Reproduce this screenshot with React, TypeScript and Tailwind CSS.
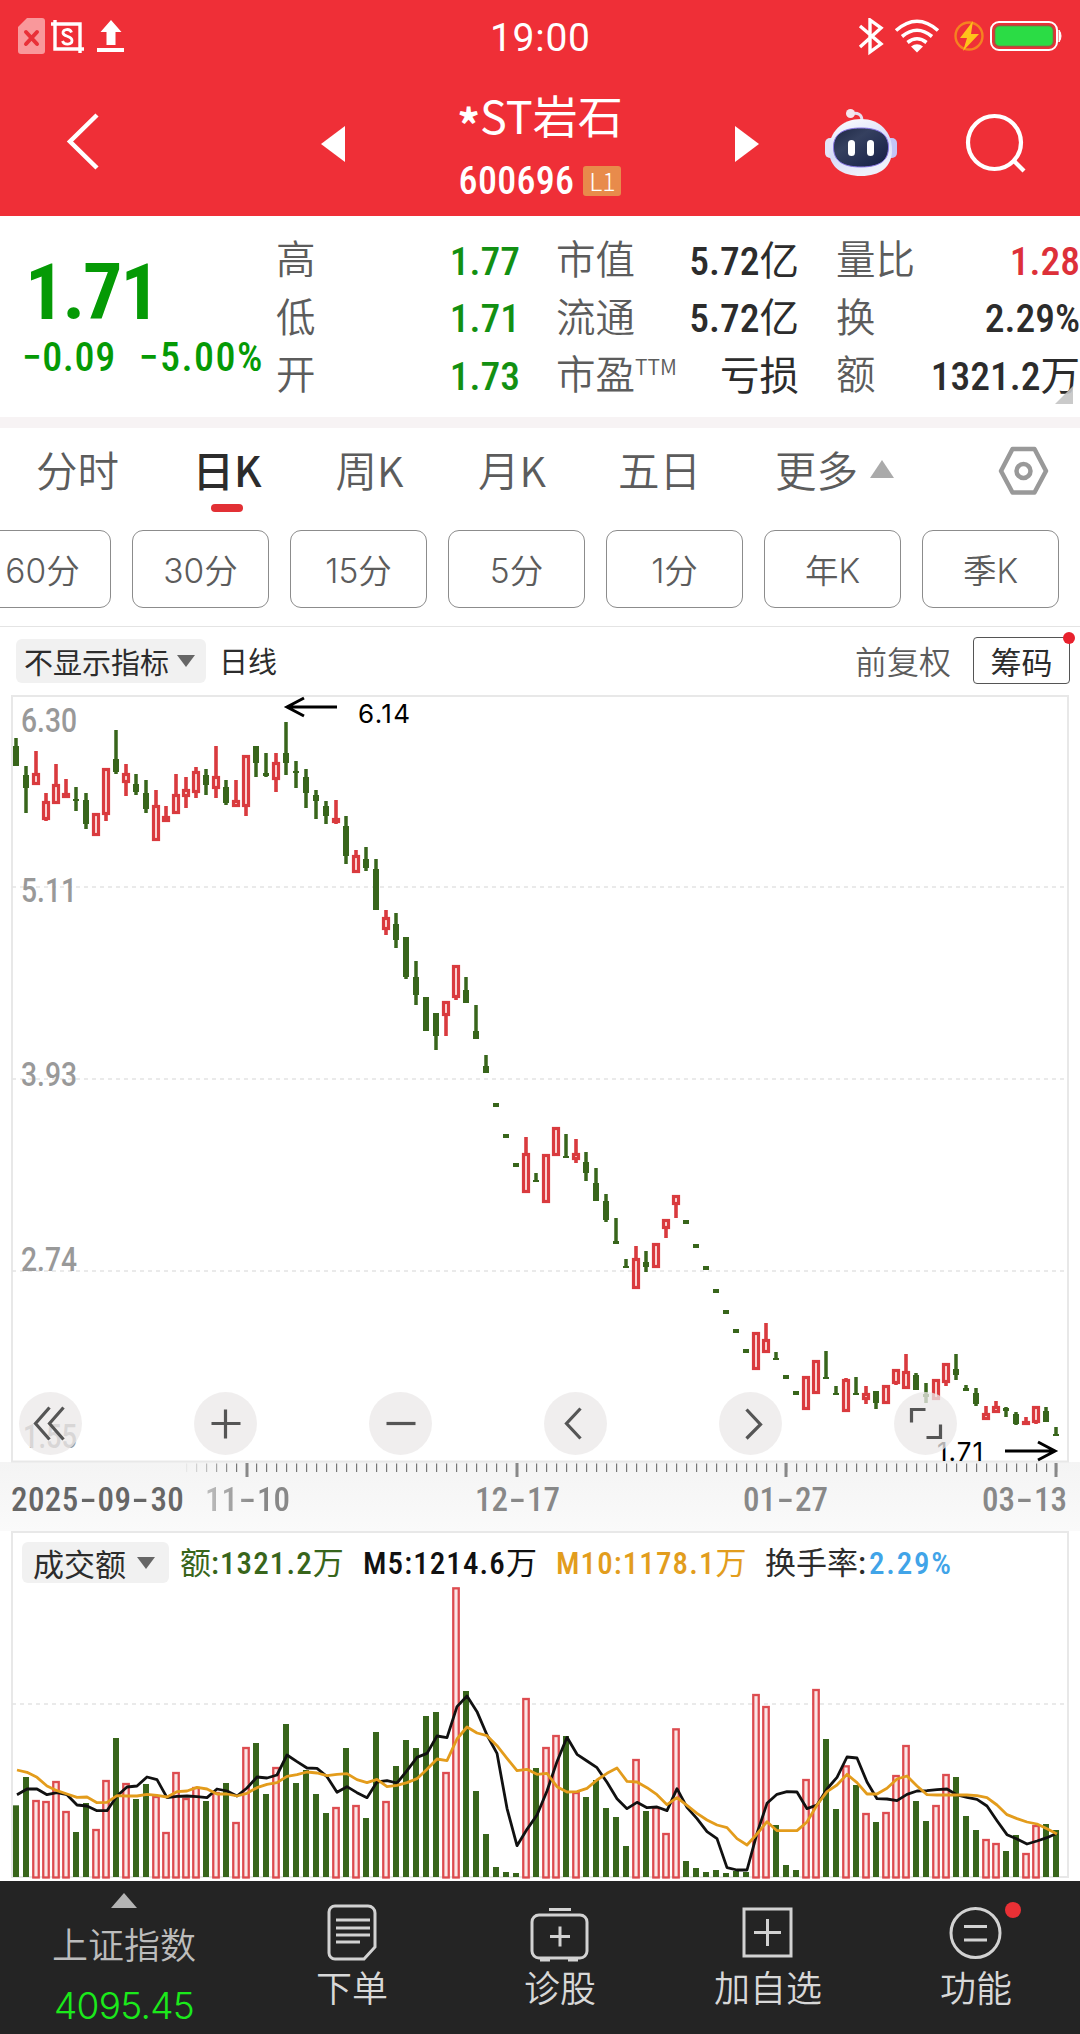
import type { ReactNode } from "react";

type Candle = [up: number, high: number, top: number, bottom: number, low: number];

// One entry per trading day: rising flag, then wick and body positions in chart pixels.
const CANDLES: Candle[] = [
  [0, 738, 746, 766, 766], [0, 766, 775, 788, 813], [1, 751, 773, 785, 785], [1, 793, 801, 820, 821], [1, 764, 784, 804, 804],
  [1, 779, 793, 798, 798], [0, 787, 799, 801, 811], [0, 793, 800, 824, 829], [1, 813, 813, 836, 836], [1, 768, 768, 815, 821],
  [0, 730, 759, 772, 774], [1, 764, 773, 783, 796], [0, 774, 784, 792, 795], [0, 780, 793, 809, 813], [1, 790, 805, 841, 841],
  [1, 806, 816, 822, 822], [1, 774, 794, 814, 814], [1, 777, 789, 797, 808], [1, 767, 771, 793, 798], [0, 769, 775, 785, 795],
  [1, 746, 776, 789, 798], [0, 780, 787, 803, 805], [1, 780, 800, 807, 807], [1, 755, 755, 807, 816], [0, 746, 746, 763, 777],
  [0, 753, 773, 776, 777], [1, 753, 762, 780, 792], [0, 722, 753, 763, 775], [0, 761, 771, 773, 788], [0, 769, 777, 793, 808],
  [0, 790, 795, 801, 819], [0, 801, 806, 816, 824], [1, 800, 818, 823, 824], [0, 816, 826, 856, 864], [1, 850, 855, 873, 873],
  [0, 847, 859, 868, 871], [0, 859, 869, 910, 910], [1, 910, 917, 930, 935], [0, 913, 924, 940, 948], [0, 937, 937, 977, 979],
  [0, 961, 977, 995, 1005], [0, 997, 997, 1031, 1031], [0, 1013, 1013, 1036, 1050], [1, 1001, 1001, 1016, 1036], [1, 965, 965, 998, 1000],
  [0, 977, 990, 1003, 1003], [0, 1005, 1031, 1039, 1039], [0, 1055, 1066, 1073, 1073], [0, 1103, 1103, 1107, 1107], [0, 1134, 1134, 1138, 1138],
  [0, 1163, 1163, 1167, 1167], [1, 1137, 1153, 1193, 1193], [0, 1173, 1180, 1182, 1182], [1, 1154, 1154, 1203, 1203], [1, 1127, 1127, 1156, 1156],
  [0, 1134, 1156, 1158, 1158], [1, 1139, 1153, 1160, 1163], [0, 1152, 1162, 1173, 1181], [0, 1168, 1183, 1201, 1201], [0, 1194, 1201, 1220, 1222],
  [0, 1218, 1241, 1244, 1244], [0, 1259, 1266, 1268, 1268], [1, 1246, 1258, 1289, 1289], [0, 1251, 1262, 1267, 1272], [1, 1243, 1243, 1268, 1268],
  [1, 1219, 1219, 1229, 1238], [1, 1195, 1195, 1205, 1218], [0, 1220, 1220, 1224, 1224], [0, 1244, 1244, 1248, 1248], [0, 1266, 1266, 1270, 1270],
  [0, 1289, 1289, 1293, 1293], [0, 1310, 1310, 1314, 1314], [0, 1329, 1329, 1333, 1333], [0, 1349, 1349, 1353, 1353], [1, 1332, 1332, 1370, 1370],
  [1, 1323, 1339, 1353, 1353], [0, 1352, 1358, 1360, 1360], [0, 1375, 1375, 1379, 1379], [0, 1391, 1391, 1395, 1395], [1, 1376, 1376, 1410, 1410],
  [1, 1360, 1360, 1394, 1394], [0, 1351, 1377, 1379, 1379], [0, 1386, 1393, 1395, 1395], [1, 1378, 1379, 1412, 1412], [0, 1377, 1393, 1395, 1395],
  [1, 1386, 1393, 1400, 1404], [0, 1391, 1391, 1403, 1409], [1, 1385, 1385, 1404, 1404], [1, 1369, 1369, 1384, 1385], [1, 1354, 1371, 1389, 1389],
  [0, 1373, 1375, 1390, 1390], [0, 1383, 1394, 1397, 1403], [1, 1379, 1379, 1400, 1400], [1, 1363, 1363, 1383, 1386], [0, 1354, 1369, 1375, 1380],
  [0, 1385, 1388, 1391, 1391], [0, 1388, 1393, 1404, 1406], [1, 1406, 1413, 1420, 1420], [1, 1401, 1406, 1413, 1413], [0, 1407, 1408, 1411, 1417],
  [0, 1412, 1414, 1424, 1425], [1, 1417, 1421, 1425, 1425], [1, 1406, 1406, 1423, 1424], [0, 1407, 1411, 1422, 1422], [0, 1427, 1434, 1436, 1436],
];

// Volume and moving averages are stored in thirds of a pixel, measured down from y = 1560.
const VOLUMES = [
  736, 651, 720, 723, 663, 753, 816, 729, 807, 660, 534, 669, 717, 672, 708, 816, 636, 714, 681, 723, 696, 669, 786, 561, 549,
  702, 621, 492, 669, 630, 702, 759, 741, 564, 735, 774, 516, 723, 618, 540, 564, 468, 456, 636, 82, 393, 693, 822, 921, 936,
  939, 414, 624, 561, 525, 528, 696, 711, 660, 744, 771, 858, 597, 753, 741, 819, 505, 903, 924, 936, 930, 939, 933, 936, 402,
  438, 795, 915, 930, 657, 387, 537, 747, 616, 675, 759, 786, 756, 645, 555, 723, 783, 735, 642, 651, 768, 810, 837, 849, 873,
  825, 879, 795, 792, 810,
];

const M5 = [
  704, 687, 687, 704, 698, 704, 735, 738, 752, 752, 708, 681, 678, 651, 659, 713, 709, 708, 710, 713, 687, 693, 708, 684, 651,
  654, 645, 585, 605, 624, 625, 650, 697, 680, 698, 713, 666, 662, 669, 632, 592, 580, 528, 533, 440, 408, 455, 525, 580, 745,
  857, 808, 765, 693, 605, 532, 583, 603, 623, 667, 716, 746, 727, 743, 741, 752, 686, 742, 776, 815, 836, 923, 930, 930, 820,
  730, 703, 695, 696, 746, 735, 687, 652, 591, 594, 666, 716, 717, 722, 703, 693, 692, 689, 687, 705, 712, 718, 738, 782, 824,
  837, 852, 843, 833, 820,
];

const M10 = [
  630, 637, 652, 678, 692, 702, 712, 711, 728, 727, 707, 708, 708, 703, 706, 711, 695, 693, 682, 687, 702, 702, 708, 700, 683,
  673, 668, 649, 644, 636, 639, 647, 643, 641, 659, 668, 658, 680, 676, 668, 656, 628, 597, 602, 537, 501, 519, 527, 557, 595,
  632, 628, 643, 640, 680, 696, 695, 685, 660, 640, 624, 664, 666, 683, 704, 734, 713, 736, 760, 780, 795, 803, 836, 855, 822,
  785, 812, 812, 812, 786, 735, 695, 675, 643, 668, 702, 702, 685, 657, 648, 678, 704, 705, 705, 705, 705, 707, 713, 735, 764,
  776, 786, 792, 806, 822,
];

const UP = "#d93a3e";
const DOWN = "#38651b";
const NUM = "font-['Roboto','Noto_Sans_CJK_SC',sans-serif] font-medium [font-stretch:85%]";
const HAN = "font-['Noto_Sans_CJK_SC',sans-serif]";

const dayX = (i: number) => 16 + i * 10;
const volY = (v: number) => 28 + v / 3;
const linePoints = (values: number[]) => values.map((v, i) => `${dayX(i) + 1},${volY(v)}`).join(" ");

function Figure({ children }: { children: string }) {
  return children.split(/([\u4e00-\u9fff]+)/).map((part, i) =>
    i % 2 ? (
      <span key={i} className="font-normal tracking-normal">{part}</span>
    ) : (
      part
    ),
  );
}

function StatusBar() {
  return (
    <div className="flex h-[74px] items-center px-[18px] text-white">
      <div className="flex w-[472px] items-center pb-0.5">
        <svg width="27" height="36" viewBox="0 0 27 36">
          <path d="M9 0H24a3 3 0 0 1 3 3V33a3 3 0 0 1-3 3H3a3 3 0 0 1-3-3V9Z" fill="#f9989b" />
          <path d="M8 14 19 26M19 14 8 26" stroke="#e93038" strokeWidth="4" strokeLinecap="round" />
        </svg>
        <svg className="ml-1.5" width="33" height="33" viewBox="0 0 33 33" fill="none" stroke="#fff" strokeWidth="3.4">
          <path d="M0 4H29V33M4 0V29H33" />
          <path d="M20.500 12.500C19 8 11.500 9 12 13c.5 4 9 2.500 9 7.500 0 4.500-8 5-9.500.5" strokeWidth="2.800" />
        </svg>
        <svg className="ml-[13px]" width="28" height="34" viewBox="0 0 28 34" fill="#fff">
          <path d="M14 1 24.500 13H18.500V26H9.500V13H3.500ZM0 29H27V33H0Z" />
        </svg>
      </div>
      <div className="flex-1 pt-0.5 font-['Roboto'] text-[39px] tracking-[0.7px]">19:00</div>
      <svg className="-mr-0.5" width="206" height="38" viewBox="858 18 206 38" fill="none" stroke="#fff">
        <path d="M860 26 881 44 870 52V20L881 28 860 47" strokeWidth="3.400" />
        <path d="M896 30.500Q917 12 938 30.500M902 36.500Q917 24 932 36.500M907.500 42.500Q917 35 926.500 42.500" strokeWidth="3.600" />
        <path d="M911 46.500Q917 42 923 46.500L917 52.500Z" fill="#fff" stroke="none" />
        <circle cx="969" cy="36" r="13.500" stroke="#f58220" strokeWidth="2.400" />
        <path d="M973 21 960 38H967L963 51 979 34H971Z" fill="#ffc21a" stroke="none" />
        <rect x="991" y="22" width="66" height="28" rx="8" strokeWidth="2" />
        <rect x="994.500" y="25.500" width="59" height="21" rx="5" fill="#2bdc45" stroke="#a8503f" strokeWidth="1.500" />
        <path d="M1059 30Q1063 36 1059 42Z" fill="#fff" strokeWidth="1" />
      </svg>
    </div>
  );
}

function Robot() {
  return (
    <svg width="74" height="70" viewBox="0 0 74 70">
      <defs>
        <linearGradient id="shell" x1="0" y1="0" x2="0.4" y2="1">
          <stop offset="0" stopColor="#ffffff" />
          <stop offset="0.6" stopColor="#d8dcf8" />
          <stop offset="1" stopColor="#eef0fb" />
        </linearGradient>
        <linearGradient id="visor" x1="0" y1="0" x2="1" y2="1">
          <stop offset="0" stopColor="#1d2744" />
          <stop offset="0.35" stopColor="#35405f" />
          <stop offset="1" stopColor="#141d45" />
        </linearGradient>
      </defs>
      <path d="M26 7Q38 4 38 14" fill="none" stroke="#e7dff0" strokeWidth="3" />
      <circle cx="26.500" cy="6.500" r="4.500" fill="#f4e6ee" />
      <rect x="1" y="31" width="12" height="20" rx="5" fill="#e4e4f6" />
      <rect x="61" y="31" width="12" height="20" rx="5" fill="#c3c5f6" />
      <path d="M37 12C56 12 68 25 68 43 68 60 56 69 37 69 18 69 5 60 5 43 5 25 18 12 37 12Z" fill="url(#shell)" />
      <path d="M37 21C56 21 64.500 28 64.500 40S58 60 37 60 9.500 52 9.500 40 18 21 37 21Z" fill="url(#visor)" stroke="#8a78e6" strokeWidth="1" />
      <rect x="24" y="33" width="7" height="16" rx="3.500" fill="#fff" />
      <rect x="43" y="33" width="7" height="16" rx="3.500" fill="#fff" />
    </svg>
  );
}

function TitleBar() {
  return (
    <div className="flex h-[142px] items-start text-white">
      <svg className="mt-[39px] ml-[66px]" width="34" height="58" viewBox="0 0 34 58">
        <path d="M31 2 4 28.500 31 55" fill="none" stroke="#fff" strokeWidth="4.500" />
      </svg>
      <svg className="mt-[52px] ml-[221px]" width="24" height="36" viewBox="0 0 24 36">
        <path d="M0 18 24 0V36Z" fill="#fff" />
      </svg>
      <div className="flex w-[390px] flex-col items-center pt-3">
        <div className={`flex h-[56px] items-center text-[45px] leading-none ${HAN}`}>
          <span className="relative top-[9px] font-bold">*</span>ST岩石
        </div>
        <div className="mt-3 flex items-center">
          <span className={`${NUM} pt-px text-[38px] leading-[52px] tracking-[0.3px]`}>600696</span>
          <span className={`ml-[9px] flex h-[30px] w-[38px] items-center justify-center rounded-[3px] bg-[#e88b4b] text-[25px] font-light ${HAN}`}>L1</span>
        </div>
      </div>
      <svg className="mt-[52px]" width="24" height="36" viewBox="0 0 24 36">
        <path d="M24 18 0 0V36Z" fill="#fff" />
      </svg>
      <div className="mt-[33px] ml-[65px]">
        <Robot />
      </div>
      <svg className="mt-[38px] ml-[66px]" width="64" height="64" viewBox="0 0 64 64" fill="none" stroke="#fff" strokeWidth="4.200">
        <circle cx="30.500" cy="30.500" r="26.500" />
        <path d="M49 48 60 59" />
      </svg>
    </div>
  );
}

function QuoteColumn({ className, rows }: { className: string; rows: [ReactNode, string, string][] }) {
  return (
    <div className={`flex flex-col pt-[15px] ${HAN} ${className}`}>
      {rows.map(([label, value, color], i) => (
        <div key={i} className="flex h-[57.5px] items-center justify-between whitespace-nowrap">
          <span className="-mt-1.5 text-[39.500px] font-[350] text-[#5c5c5c]">{label}</span>
          <span className={`${NUM} mt-[3px] text-[39.500px] leading-none ${color}`}>
            <Figure>{value}</Figure>
          </span>
        </div>
      ))}
    </div>
  );
}

function Quote() {
  return (
    <section className="flex h-[201px] bg-white">
      <div className={`${NUM} w-[276px] text-[#059a05]`}>
        <div className="mt-[33px] ml-[25px] text-[78px] leading-[87px] font-bold tracking-[-2px]">1.71</div>
        <div className="ml-[22px] flex gap-[23px] text-[40px] leading-[44px] tracking-[0.6px] whitespace-nowrap">
          <span>−0.09</span>
          <span className="tracking-[1.500px]">−5.00%</span>
        </div>
      </div>
      <QuoteColumn
        className="w-[244px]"
        rows={[
          ["高", "1.77", "text-[#129012]"],
          ["低", "1.71", "text-[#129012]"],
          ["开", "1.73", "text-[#129012]"],
        ]}
      />
      <QuoteColumn
        className="ml-[36px] w-[243px]"
        rows={[
          ["市值", "5.72亿", "text-[#2c2c2c]"],
          ["流通", "5.72亿", "text-[#2c2c2c]"],
          [<>市盈<sup className="top-[-14px] text-[21px]">TTM</sup></>, "亏损", "text-[#2c2c2c]"],
        ]}
      />
      <div className="relative ml-[37px] w-[244px]">
        <QuoteColumn
          className=""
          rows={[
            ["量比", "1.28", "text-[#dd3039]"],
            ["换", "2.29%", "text-[#2c2c2c]"],
            ["额", "1321.2万", "text-[#2c2c2c]"],
          ]}
        />
        <svg className="absolute right-[7px] bottom-[13px]" width="18" height="18">
          <path d="M18 0V18H0Z" fill="#c4c4c4" fillOpacity="0.9" />
        </svg>
      </div>
    </section>
  );
}

function Tabs() {
  const tab = "flex flex-col items-center";
  return (
    <div className={`flex h-[102px] items-start bg-white pt-[17px] text-[41.500px] leading-[48px] font-[350] text-[#5c5c5c] ${HAN}`}>
      <span className={`${tab} w-[155px]`}>分时</span>
      <span className={`${tab} w-[144px] font-medium text-[#2c2c2c]`}>
        日K
        <span className="mt-[11px] h-2 w-8 rounded-full bg-[#e23035]" />
      </span>
      <span className={`${tab} w-[141px]`}>周K</span>
      <span className={`${tab} w-[144px]`}>月K</span>
      <span className={`${tab} w-[151px]`}>五日</span>
      <span className="ml-[40px] flex w-[222px] items-center">
        更多
        <svg className="ml-3" width="24" height="18" viewBox="0 0 24 18">
          <path d="M12 0 24 18H0Z" fill="#aaa" />
        </svg>
      </span>
      <svg width="52" height="50" viewBox="0 0 52 50" fill="none" stroke="#999" strokeWidth="4.500" strokeLinejoin="round">
        <path d="M15.500 4H37.500L49 26 37.500 47.500H15.500L4 26Z" />
        <circle cx="26.500" cy="26" r="7" />
      </svg>
    </div>
  );
}

function Periods() {
  return (
    <div className="-ml-[26px] flex h-[97px] w-[1106px] gap-[21px] border-b border-[#e4e4e4] bg-white font-['Inter','Noto_Sans_CJK_SC',sans-serif] text-[33.500px] font-[350] text-[#5c5c5c]">
      {["60分", "30分", "15分", "5分", "1分", "年K", "季K"].map((name) => (
        <button key={name} type="button" className="h-[78px] w-[137px] shrink-0 rounded-[11px] border border-[#8c8c8c] pt-1">
          {name}
        </button>
      ))}
    </div>
  );
}

function Caret() {
  return (
    <svg width="18" height="12" viewBox="0 0 18 12">
      <path d="M0 0H18L9 12Z" fill="#666" />
    </svg>
  );
}

function ChartToolbar() {
  return (
    <div className={`flex h-[69px] items-start bg-white pt-[10px] text-[29px] leading-none text-[#2c2c2c] ${HAN}`}>
      <div className="mt-0.5 ml-4 flex h-11 w-[190px] items-center justify-between rounded-md bg-[#f1f1f1] pr-[11px] pl-2">
        <span>不显示指标</span>
        <Caret />
      </div>
      <span className="mt-[9px] ml-[13px]">日线</span>
      <span className="mt-[7px] ml-[578px] text-[32px] font-[350] text-[#5c5c5c]">前复权</span>
      <div className="relative ml-[22px] flex h-[47px] w-[97px] items-center justify-center rounded border border-[#555] text-[31px] leading-none">
        筹码
        <span className="absolute -top-1.5 -right-1.5 size-3 rounded-full bg-[#e8212d]" />
      </div>
    </div>
  );
}

const CONTROLS = [
  "M-1-16-15 0-1 16M13-16-1 0 13 16",
  "M-14 0H15M0-14V15",
  "M-14 0H15",
  "M5-15-9 0 5 15",
  "M-4-14 10 1-4 15",
  "M-14-1V-14H0M15 1V14H1",
];

function PriceChart() {
  const label = { fontSize: 33, fill: "#999", fontFamily: "Roboto", fontWeight: 500, lengthAdjust: "spacingAndGlyphs" as const };
  return (
    <svg className="relative block overflow-visible bg-white" width="1080" height="766" viewBox="0 696 1080 766">
      <rect x="12" y="696" width="1056" height="765.500" fill="none" stroke="#e8e8e8" strokeWidth="2" />
      <path d="M12 887H1068M12 1079H1068M12 1271H1068" stroke="#e4e4e4" strokeWidth="1.500" strokeDasharray="4 4" />
      <text x="21" y="732" textLength="56" {...label}>6.30</text>
      <text x="21" y="902" textLength="56" {...label}>5.11</text>
      <text x="21" y="1086" textLength="56" {...label}>3.93</text>
      <text x="21" y="1271" textLength="56" {...label}>2.74</text>
      <text x="23" y="1448" textLength="54" {...label}>1.55</text>
      {CANDLES.map(([up, high, top, bottom, low], i) => {
        const x = dayX(i);
        if (!up) {
          return (
            <g key={i} fill={DOWN}>
              <rect x={x - 1.75} y={high} width="3.500" height={low - high} />
              <rect x={x - 3} y={top} width="6" height={bottom - top} />
            </g>
          );
        }
        return (
          <g key={i} stroke={UP} strokeWidth="3.200">
            <path d={`M${x} ${high}V${top}M${x} ${bottom}V${low}`} strokeWidth="3.600" />
            <rect x={x - 2.5} y={top + 1.5} width="5" height={Math.max(bottom - top - 3, 1)} fill="#fde4e2" />
          </g>
        );
      })}
      <g fill="none" stroke="#000" strokeWidth="3">
        <path d="M337 707H287M304 698 287 707 304 716" />
        <path d="M1005 1451H1055M1038 1442 1055 1451 1038 1460" />
      </g>
      <g fontFamily="Inter, sans-serif" fontSize="26">
        <text x="358" y="723" textLength="52">6.14</text>
        <text x="937" y="1461" textLength="46">1.71</text>
      </g>
      {CONTROLS.map((d, i) => (
        <g key={d} transform={`translate(${50.5 + i * 175} 1423.500)`}>
          <circle r="31.500" fill="#ebe8e9" fillOpacity="0.76" />
          <path d={d} fill="none" stroke="#555" strokeWidth="3.200" />
        </g>
      ))}
    </svg>
  );
}

function DateLabel({ date, className }: { date: string; className: string }) {
  return (
    <span className={className}>
      {date.split("-").map((part, i) => (
        <span key={i}>
          {i > 0 && <span className="inline-block w-[19px] scale-x-[1.700] text-center">-</span>}
          {part}
        </span>
      ))}
    </span>
  );
}

function DateAxis() {
  const majors = [247, 517, 786, 1056];
  return (
    <div className={`flex h-[69px] flex-col bg-linear-to-b from-[#f4f4f4] to-[#fafafa] text-[33px] leading-none text-[#888] ${NUM}`}>
      <svg width="1080" height="16" viewBox="0 0 1080 16">
        {CANDLES.slice(17).map((_, i) => (
          <rect key={i} x={186 + i * 10} y="1.500" width="1.200" height="8.500" fill="#777" opacity={Math.min(1, 0.1 + i * 0.18)} />
        ))}
        {majors.map((x) => (
          <rect key={x} x={x - 1.5} y="1" width="3" height="14" fill="#888" />
        ))}
      </svg>
      <div className="mt-[5px] flex h-[32px] items-center pr-[13px] pl-[11px] whitespace-nowrap">
        <DateLabel date="2025-09-30" className="w-[194px] tracking-[0.4px] text-[#666]" />
        <DateLabel date="11-10" className="w-[270px] [mask-image:linear-gradient(to_right,rgba(0,0,0,0.5),black_50px)]" />
        <DateLabel date="12-17" className="w-[268px]" />
        <DateLabel date="01-27" className="w-[239px]" />
        <DateLabel date="03-13" className="" />
      </div>
    </div>
  );
}

function VolumeChart() {
  return (
    <section className="h-[350px] bg-white">
      <div className={`mx-[11px] flex h-[52px] items-start border-x-2 border-t-2 border-[#e8e8e8] pt-[9px] pl-[9px] text-[31px] leading-[41px] whitespace-nowrap text-[#2c2c2c] ${HAN}`}>
        <div className="flex h-[41px] w-[147px] items-center justify-between rounded-md bg-[#f1f1f1] pr-3.5 pl-[11px]">
          成交额
          <Caret />
        </div>
        <div className={`flex pt-px tracking-[1.100px] ${NUM}`}>
          <span className="ml-[11px] w-[183px] text-[#38651b]"><Figure>额:1321.2万</Figure></span>
          <span className="w-[193px] text-[#111]"><Figure>M5:1214.6万</Figure></span>
          <span className="w-[209px] text-[#e29d1d]"><Figure>M10:1178.1万</Figure></span>
          <span><Figure>换手率:</Figure></span>
          <span className="ml-0.5 tracking-[1.800px] text-[#41a4e8]">2.29%</span>
        </div>
      </div>
      <svg className="block" width="1080" height="298" viewBox="0 51 1080 298">
        <path d="M12 50V345H1068V50" fill="none" stroke="#e8e8e8" strokeWidth="2" />
        <path d="M12 172H1068" stroke="#e4e4e4" strokeWidth="1.500" strokeDasharray="4 4" />
        {VOLUMES.map((v, i) =>
          CANDLES[i][0] ? (
            <rect key={i} x={dayX(i) - 2.75} y={volY(v) + 1} width="5.500" height={344.5 - volY(v)} fill="#fbe6e6" stroke={UP} strokeWidth="2.300" strokeOpacity="0.9" />
          ) : (
            <rect key={i} x={dayX(i) - 3} y={volY(v)} width="6" height={345 - volY(v)} fill={DOWN} />
          ),
        )}
        <polyline points={linePoints(M5)} fill="none" stroke="#111" strokeWidth="2.800" strokeLinejoin="round" />
        <polyline points={linePoints(M10)} fill="none" stroke="#e39c1c" strokeWidth="2.800" strokeLinejoin="round" />
      </svg>
    </section>
  );
}

function NavItem({ label, children }: { label: string; children: ReactNode }) {
  return (
    <button type="button" className="flex w-[208px] flex-col items-center pt-[23px]">
      <svg width="60" height="58" viewBox="0 0 60 58" fill="none" stroke="#d2d2d2" strokeWidth="3">
        {children}
      </svg>
      <span className="mt-px text-[36px] leading-[46px]">{label}</span>
    </button>
  );
}

function BottomNav() {
  return (
    <nav className={`relative flex h-[153px] bg-[#242424] font-[350] text-[#d8d8d8] ${HAN}`}>
      <div className="flex w-[248px] flex-col items-center pt-3">
        <svg width="26" height="15" viewBox="0 0 26 15">
          <path d="M13 0 26 15H0Z" fill="#b4b4b4" />
        </svg>
        <span className="mt-3 text-[36px] leading-[46px] text-[#bcbcbc]">上证指数</span>
        <span className="mt-[17px] font-['Inter'] text-[37px] leading-[46px] font-[350] tracking-[-0.7px] text-[#1bea1b]">4095.45</span>
      </div>
      <NavItem label="下单">
        <path d="M13 2H46a7 7 0 0 1 7 7V43L42 55H13a6 6 0 0 1-6-6V8a6 6 0 0 1 6-6Z" />
        <path d="M14 16H48M14 24H48M14 31H48M14 38H38" />
      </NavItem>
      <NavItem label="诊股">
        <rect x="2" y="11" width="55" height="43" rx="7" />
        <path d="M19 5.500H41M20 32.500H40M30 22.500V42.500M10 56H20M38 56H48" />
      </NavItem>
      <NavItem label="加自选">
        <path d="M6 5H53V52H6ZM16 28.500H43M29.500 15V42" />
      </NavItem>
      <NavItem label="功能">
        <circle cx="29.500" cy="29" r="24.500" />
        <path d="M18 22.500H41M18 36H41" />
      </NavItem>
      <span className="absolute top-[21px] left-[1005px] size-4 rounded-full bg-[#e93035]" />
    </nav>
  );
}

export default function App() {
  return (
    <main className="flex h-[2034px] w-[1080px] flex-col overflow-hidden bg-white">
      <header className="h-[216px] shrink-0 bg-[#ef2f37]">
        <StatusBar />
        <TitleBar />
      </header>
      <Quote />
      <div className="h-[11px] shrink-0 bg-[#f7f3f4]" />
      <Tabs />
      <Periods />
      <ChartToolbar />
      <PriceChart />
      <DateAxis />
      <VolumeChart />
      <BottomNav />
    </main>
  );
}
